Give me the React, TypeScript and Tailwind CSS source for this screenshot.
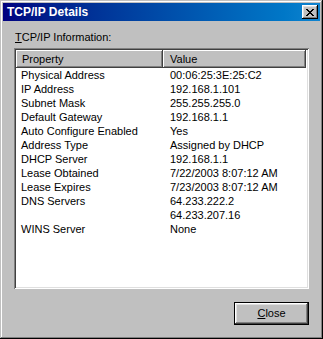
import React from "react";

const rows: [string, string][] = [
  ["Physical Address", "00:06:25:3E:25:C2"],
  ["IP Address", "192.168.1.101"],
  ["Subnet Mask", "255.255.255.0"],
  ["Default Gateway", "192.168.1.1"],
  ["Auto Configure Enabled", "Yes"],
  ["Address Type", "Assigned by DHCP"],
  ["DHCP Server", "192.168.1.1"],
  ["Lease Obtained", "7/22/2003 8:07:12 AM"],
  ["Lease Expires", "7/23/2003 8:07:12 AM"],
  ["DNS Servers", "64.233.222.2"],
  ["", "64.233.207.16"],
  ["WINS Server", "None"],
];

export default function App() {
  return (
    <div
      className="w-[323px] h-[339px] bg-[#c0c0c0] p-[3px] flex flex-col text-[11px] text-black shadow-[inset_-1px_-1px_#000,inset_1px_1px_#c0c0c0,inset_-2px_-2px_#808080,inset_2px_2px_#fff]"
      style={{ fontFamily: '"Liberation Sans", Arial, sans-serif' }}
    >
      {/* Title bar */}
      <div className="h-[18px] flex items-center justify-between bg-gradient-to-r from-[#000080] to-[#1084d0] pl-[4px] pr-[2px]">
        <span className="text-white font-bold text-[12px] leading-[18px]">TCP/IP Details</span>
        <div className="w-[16px] h-[14px] bg-[#c0c0c0] flex items-center justify-center shadow-[inset_-1px_-1px_#000,inset_1px_1px_#fff,inset_-2px_-2px_#808080,inset_2px_2px_#dfdfdf]">
          <svg width="8" height="7" viewBox="0 0 8 7" shapeRendering="crispEdges">
            <path d="M0 0h2v1h-2zM6 0h2v1h-2zM1 1h2v1h-2zM5 1h2v1h-2zM2 2h4v1h-4zM3 3h2v1h-2zM2 4h4v1h-4zM1 5h2v1h-2zM5 5h2v1h-2zM0 6h2v1h-2zM6 6h2v1h-2z" fill="#000" />
          </svg>
        </div>
      </div>

      {/* Content */}
      <div className="flex-1 flex flex-col px-[11px] pt-[10px] pb-[11px]">
        <div className="h-[13px] leading-[13px] pl-[1px]">
          <span className="underline underline-offset-[1px]">T</span>CP/IP Information:
        </div>
        <div className="mt-[4px] h-[241px] p-[2px] bg-white shadow-[inset_1px_1px_#808080,inset_-1px_-1px_#fff,inset_2px_2px_#404040,inset_-2px_-2px_#dfdfdf] flex flex-col">
          <div className="h-[18px] flex">
            <div className="w-[147px] h-[18px] bg-[#c0c0c0] pl-[6px] leading-[18px] shadow-[inset_-1px_-1px_#404040,inset_1px_1px_#fff,inset_-2px_-2px_#808080]">
              Property
            </div>
            <div className="w-[143px] h-[18px] bg-[#c0c0c0] pl-[7px] leading-[18px] shadow-[inset_-1px_-1px_#404040,inset_1px_1px_#fff,inset_-2px_-2px_#808080]">
              Value
            </div>
          </div>
          <div className="flex flex-col">
            {rows.map(([k, v], i) => (
              <div key={i} className="h-[14px] leading-[14px] grid grid-cols-[147px_1fr]">
                <div className="pl-[5px] whitespace-nowrap">{k}</div>
                <div className="pl-[7px] whitespace-nowrap">{v}</div>
              </div>
            ))}
          </div>
        </div>
        <div className="mt-[13px] flex justify-end">
          <button className="w-[75px] h-[23px] bg-[#c0c0c0] border border-black flex items-center justify-center shadow-[inset_-1px_-1px_#404040,inset_1px_1px_#fff,inset_-2px_-2px_#808080,inset_2px_2px_#dfdfdf]">
            <span>
              <span className="underline underline-offset-[1px]">C</span>lose
            </span>
          </button>
        </div>
      </div>
    </div>
  );
}
